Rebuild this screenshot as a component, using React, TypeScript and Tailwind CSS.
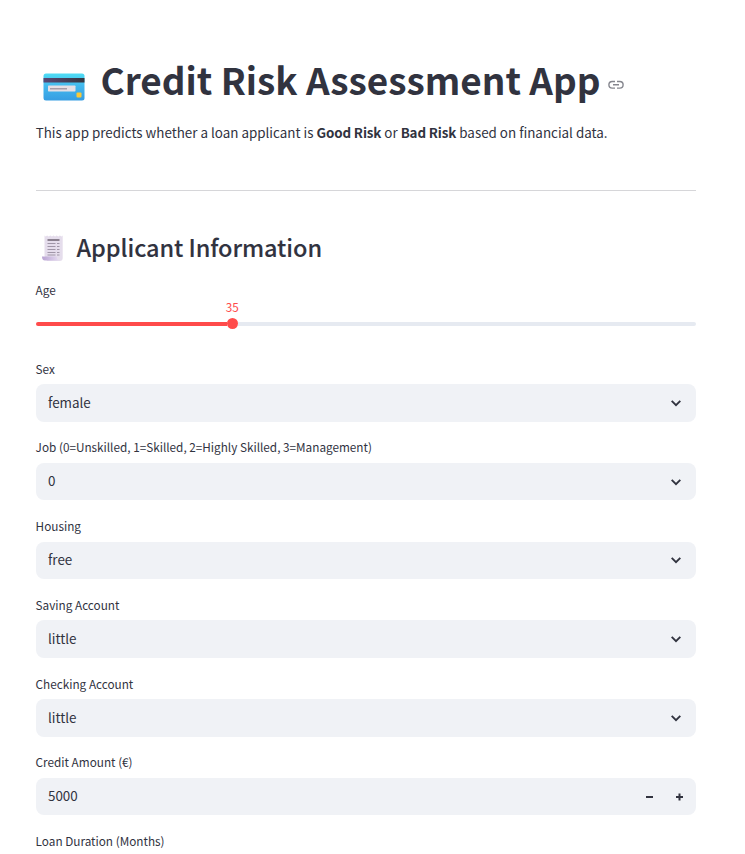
import React from "react";

const selects = [
  { label: "Sex", value: "female" },
  { label: "Job (0=Unskilled, 1=Skilled, 2=Highly Skilled, 3=Management)", value: "0" },
  { label: "Housing", value: "free" },
  { label: "Saving Account", value: "little" },
  { label: "Checking Account", value: "little" },
];

function CardIcon() {
  return (
    <svg className="ml-[6.5px] mt-[15px] h-[28px] w-[42px] shrink-0" viewBox="0 0 42 28">
      <defs>
        <linearGradient id="card" x1="0" y1="0" x2="0" y2="1">
          <stop offset="0" stopColor="#4fdcf4" />
          <stop offset="0.45" stopColor="#43b9ee" />
          <stop offset="1" stopColor="#369de2" />
        </linearGradient>
        <linearGradient id="band">
          <stop offset="0" stopColor="#594775" />
          <stop offset="1" stopColor="#343640" />
        </linearGradient>
      </defs>
      <rect x="0.5" y="0.5" width="41" height="27" rx="2.5" fill="url(#card)" />
      <rect x="0.5" y="5" width="41" height="4.500" fill="url(#band)" />
      <rect x="5" y="12.5" width="27.5" height="6" rx="0.7" fill="#e4dfe5" />
      <rect x="7" y="15" width="17" height="1.5" fill="#a59ca8" />
      <rect x="33.5" y="19.5" width="5" height="5" rx="1" fill="#fbc936" />
    </svg>
  );
}

function ReceiptIcon() {
  return (
    <svg className="ml-[6px] h-[28px] w-[22px] shrink-0" viewBox="0 0 22 28">
      <defs>
        <linearGradient id="roll">
          <stop offset="0" stopColor="#b9a3d3" />
          <stop offset="1" stopColor="#e4daf0" />
        </linearGradient>
      </defs>
      <path d="M2.5 1.500l1.2 1 1.4-1 1.6 1 1.6-1 1.6 1 1.6-1 1.6 1 1.6-1 1.6 1 1.6-1 1.6 1 1.2-1v22.5q0 3-3 3H5L2.5 22z" fill="#e5ddec" />
      <path d="M0 22.500h14.500q0 2.5 2.5 4H3Q0 26.500 0 22.500z" fill="url(#roll)" />
      <path d="M5.500 6h12" stroke="#8a808f" strokeWidth="2" />
      <path d="M5.500 9.500h8M15 9.500h2.500M5.500 12.500h8M15 12.500h2.500M5.500 15.500h8M15 15.500h2.500M5.500 18.500h8M15 18.500h2.500M5.500 21h8M15 21h2.500" stroke="#a096a8" strokeWidth="1" />
    </svg>
  );
}

function Label({ children }: { children: React.ReactNode }) {
  return <div className="-ml-[0.4px] -mt-[0.25px] mb-[4px] h-[22.5px] whitespace-nowrap text-[11.75px] leading-[22px]">{children}</div>;
}

export default function App() {
  return (
    <main className="h-[854px] w-[745px] overflow-hidden bg-white pl-[36px] pr-[49px] pt-[54px] font-['Noto_Sans_CJK_SC',sans-serif] text-[#31333f]">
      <header className="flex h-[50px] items-center">
        <CardIcon />
        <h1 className="ml-[16px] whitespace-nowrap text-[36.9px] font-bold leading-[50px]">Credit Risk Assessment App</h1>
        <svg className="ml-[7.5px] mt-[11px] h-[16px] w-[16px] shrink-0" viewBox="0 0 16 16" fill="none" stroke="#85868e" strokeWidth="1.4">
          <path d="M7 4.500H4.200a3.300 3.300 0 0 0 0 6.600H7M9 4.500h2.800a3.300 3.300 0 0 1 0 6.600H9M5 7.800h6" />
        </svg>
      </header>
      <p className="-ml-[0.3px] mt-[16px] h-[24px] whitespace-nowrap text-[13.4px] leading-[24px]">
        This app predicts whether a loan applicant is <strong className="font-bold tracking-[-0.12px]">Good Risk</strong> or <strong className="font-bold tracking-[-0.12px]">Bad Risk</strong> based on financial data.
      </p>
      <hr className="mt-[46px] border-t border-[#d6d6d9]" />
      <div className="mt-[39px] flex h-[36px] items-center">
        <ReceiptIcon />
        <h2 className="-mt-[2px] ml-[12.5px] whitespace-nowrap text-[23.5px] font-medium leading-[36px] tracking-[-0.07px] [-webkit-text-stroke:0.1px_#31333f]">Applicant Information</h2>
      </div>
      <section className="mt-[13px] h-[79px]">
        <Label>Age</Label>
        <div className="-mt-[6px] w-[392.5px] text-center text-[11.75px] leading-[15px] text-[#ff4b4b]">35</div>
        <div className="mt-[3.500px] flex h-[12px] items-center">
          <div className="h-[4px] w-[191px] rounded-l-full bg-[#ff4b4b]" />
          <div className="h-[11px] w-[11px] rounded-full bg-[#ff4b4b]" />
          <div className="h-[4px] flex-1 rounded-r-full bg-[#e6eaf1]" />
        </div>
      </section>
      {selects.map((item) => (
        <section key={item.label} className="mb-[15px]">
          <Label>{item.label}</Label>
          <div className="flex h-[37.5px] items-center justify-between rounded-[8px] bg-[#f0f2f6] pl-[12px] pr-[14px]">
            <span className="mb-[2.200px] text-[13.4px] leading-[24px]">{item.value}</span>
            <svg className="h-[12px] w-[12px]" viewBox="0 0 12 12" fill="none" stroke="#31333f" strokeWidth="1.9">
              <path d="M1.700 3.800 6 8.100l4.300-4.300" />
            </svg>
          </div>
        </section>
      ))}
      <section className="mb-[15px]">
        <Label>Credit Amount (€)</Label>
        <div className="flex h-[37.5px] items-center rounded-[8px] bg-[#f0f2f6] pl-[12px] pr-[12px]">
          <span className="mb-[2.200px] flex-1 text-[13.4px] leading-[24px]">5000</span>
          <svg className="h-[8px] w-[38px]" viewBox="0 0 38 8" stroke="#31333f" strokeWidth="2">
            <path d="M0 4h7M30 4h7M33.500 .5v7" />
          </svg>
        </div>
      </section>
      <Label>Loan Duration (Months)</Label>
    </main>
  );
}
